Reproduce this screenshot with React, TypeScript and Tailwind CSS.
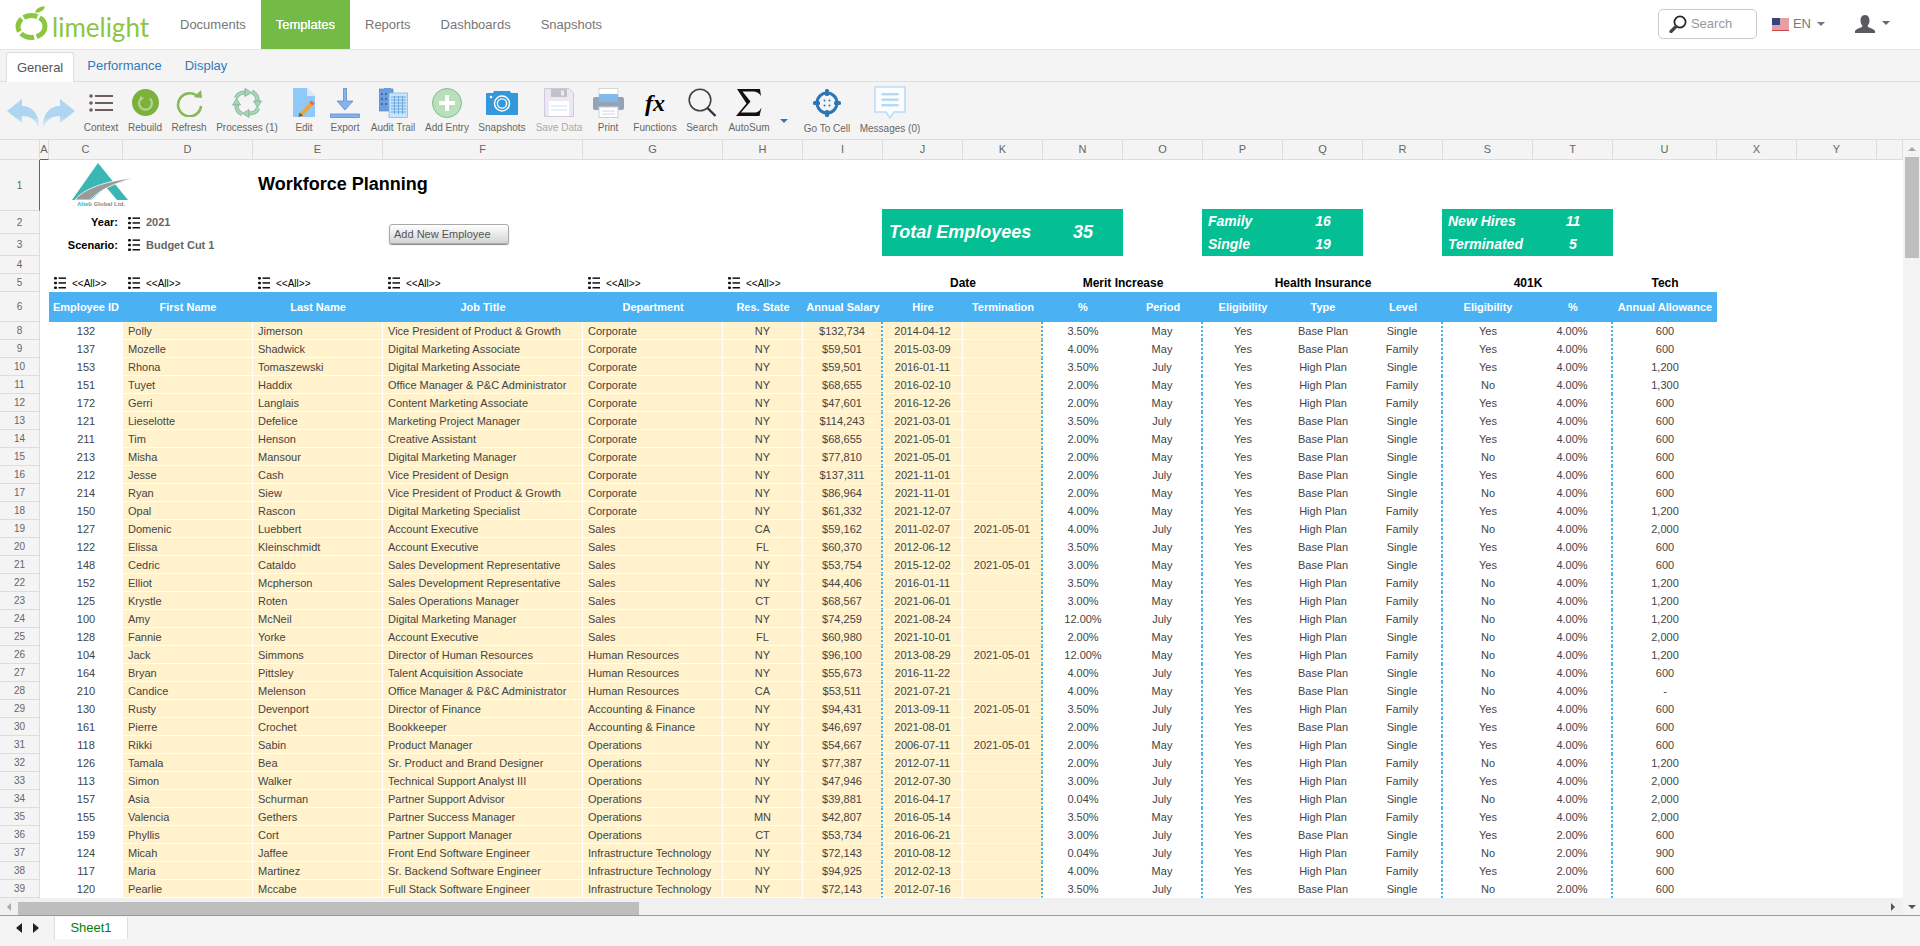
import type { ReactNode } from "react";

const data = `132|Polly|Jimerson|Vice President of Product & Growth|Corporate|NY|$132,734|2014-04-12||3.50%|May|Yes|Base Plan|Single|Yes|4.00%|600
137|Mozelle|Shadwick|Digital Marketing Associate|Corporate|NY|$59,501|2015-03-09||4.00%|May|Yes|Base Plan|Family|Yes|4.00%|600
153|Rhona|Tomaszewski|Digital Marketing Associate|Corporate|NY|$59,501|2016-01-11||3.50%|July|Yes|High Plan|Single|Yes|4.00%|1,200
151|Tuyet|Haddix|Office Manager & P&C Administrator|Corporate|NY|$68,655|2016-02-10||2.00%|May|Yes|High Plan|Family|No|4.00%|1,300
172|Gerri|Langlais|Content Marketing Associate|Corporate|NY|$47,601|2016-12-26||2.00%|May|Yes|High Plan|Family|Yes|4.00%|600
121|Lieselotte|Defelice|Marketing Project Manager|Corporate|NY|$114,243|2021-03-01||3.50%|July|Yes|Base Plan|Single|Yes|4.00%|600
211|Tim|Henson|Creative Assistant|Corporate|NY|$68,655|2021-05-01||2.00%|May|Yes|Base Plan|Single|Yes|4.00%|600
213|Misha|Mansour|Digital Marketing Manager|Corporate|NY|$77,810|2021-05-01||2.00%|May|Yes|Base Plan|Single|No|4.00%|600
212|Jesse|Cash|Vice President of Design|Corporate|NY|$137,311|2021-11-01||2.00%|July|Yes|Base Plan|Single|Yes|4.00%|600
214|Ryan|Siew|Vice President of Product & Growth|Corporate|NY|$86,964|2021-11-01||2.00%|May|Yes|Base Plan|Single|No|4.00%|600
150|Opal|Rascon|Digital Marketing Specialist|Corporate|NY|$61,332|2021-12-07||4.00%|May|Yes|High Plan|Family|Yes|4.00%|1,200
127|Domenic|Luebbert|Account Executive|Sales|CA|$59,162|2011-02-07|2021-05-01|4.00%|July|Yes|High Plan|Family|No|4.00%|2,000
122|Elissa|Kleinschmidt|Account Executive|Sales|FL|$60,370|2012-06-12||3.50%|May|Yes|Base Plan|Single|Yes|4.00%|600
148|Cedric|Cataldo|Sales Development Representative|Sales|NY|$53,754|2015-12-02|2021-05-01|3.00%|May|Yes|Base Plan|Single|Yes|4.00%|600
152|Elliot|Mcpherson|Sales Development Representative|Sales|NY|$44,406|2016-01-11||3.50%|May|Yes|High Plan|Family|No|4.00%|1,200
125|Krystle|Roten|Sales Operations Manager|Sales|CT|$68,567|2021-06-01||3.00%|May|Yes|High Plan|Family|No|4.00%|1,200
100|Amy|McNeil|Digital Marketing Manager|Sales|NY|$74,259|2021-08-24||12.00%|July|Yes|High Plan|Family|No|4.00%|1,200
128|Fannie|Yorke|Account Executive|Sales|FL|$60,980|2021-10-01||2.00%|May|Yes|High Plan|Single|No|4.00%|2,000
104|Jack|Simmons|Director of Human Resources|Human Resources|NY|$96,100|2013-08-29|2021-05-01|12.00%|May|Yes|High Plan|Family|No|4.00%|1,200
164|Bryan|Pittsley|Talent Acquisition Associate|Human Resources|NY|$55,673|2016-11-22||4.00%|July|Yes|Base Plan|Single|No|4.00%|600
210|Candice|Melenson|Office Manager & P&C Administrator|Human Resources|CA|$53,511|2021-07-21||4.00%|May|Yes|Base Plan|Single|No|4.00%|-
130|Rusty|Devenport|Director of Finance|Accounting & Finance|NY|$94,431|2013-09-11|2021-05-01|3.50%|July|Yes|High Plan|Family|Yes|4.00%|600
161|Pierre|Crochet|Bookkeeper|Accounting & Finance|NY|$46,697|2021-08-01||2.00%|July|Yes|Base Plan|Single|Yes|4.00%|600
118|Rikki|Sabin|Product Manager|Operations|NY|$54,667|2006-07-11|2021-05-01|2.00%|May|Yes|High Plan|Single|Yes|4.00%|600
126|Tamala|Bea|Sr. Product and Brand Designer|Operations|NY|$77,387|2012-07-11||2.00%|July|Yes|High Plan|Family|No|4.00%|1,200
113|Simon|Walker|Technical Support Analyst III|Operations|NY|$47,946|2012-07-30||3.00%|July|Yes|High Plan|Family|Yes|4.00%|2,000
157|Asia|Schurman|Partner Support Advisor|Operations|NY|$39,881|2016-04-17||0.04%|July|Yes|High Plan|Single|No|4.00%|2,000
155|Valencia|Gethers|Partner Success Manager|Operations|MN|$42,807|2016-05-14||3.50%|May|Yes|High Plan|Family|Yes|4.00%|2,000
159|Phyllis|Cort|Partner Support Manager|Operations|CT|$53,734|2016-06-21||3.00%|July|Yes|Base Plan|Single|Yes|2.00%|600
124|Micah|Jaffee|Front End Software Engineer|Infrastructure Technology|NY|$72,143|2010-08-12||0.04%|July|Yes|High Plan|Family|No|2.00%|900
117|Maria|Martinez|Sr. Backend Software Engineer|Infrastructure Technology|NY|$94,925|2012-02-13||4.00%|May|Yes|High Plan|Family|Yes|2.00%|600
120|Pearlie|Mccabe|Full Stack Software Engineer|Infrastructure Technology|NY|$72,143|2012-07-16||3.50%|July|Yes|Base Plan|Single|No|2.00%|600`
  .split("\n")
  .map((line) => line.split("|"));

const creamLeft = "pl-[5px] bg-[#fff2cc] border-r border-b border-white";
const creamCenter = "text-center bg-[#fff2cc] border-r border-b border-white";
const creamDotted =
  "text-center bg-[#fff2cc] border-b border-b-white border-r-2 border-dotted border-r-[#4ab1f3]";
const plain = "text-center";
const plainDotted = "text-center border-r-2 border-dotted border-r-[#4ab1f3]";

const cellStyles = [
  plain,
  creamLeft,
  creamLeft,
  creamLeft,
  creamLeft,
  creamCenter,
  creamDotted,
  creamCenter,
  creamDotted,
  plain,
  plainDotted,
  plain,
  plain,
  plainDotted,
  plain,
  plainDotted,
  plain,
];

const columnLetters = ["A", "C", "D", "E", "F", "G", "H", "I", "J", "K", "N", "O", "P", "Q", "R", "S", "T", "U", "X", "Y", ""];

const headers = [
  "Employee ID",
  "First Name",
  "Last Name",
  "Job Title",
  "Department",
  "Res. State",
  "Annual Salary",
  "Hire",
  "Termination",
  "%",
  "Period",
  "Eligibility",
  "Type",
  "Level",
  "Eligibility",
  "%",
  "Annual Allowance",
];

function ListIcon() {
  return (
    <svg width="12" height="12" viewBox="0 0 12 12" className="shrink-0">
      <g fill="#111">
        <rect x="0" y="0" width="3" height="2.4" rx="1" />
        <rect x="0" y="4.8" width="3" height="2.4" rx="1" />
        <rect x="0" y="9.6" width="3" height="2.4" rx="1" />
        <rect x="4.5" y="0.4" width="7.5" height="1.5" />
        <rect x="4.5" y="5.2" width="7.5" height="1.5" />
        <rect x="4.5" y="10" width="7.5" height="1.5" />
      </g>
    </svg>
  );
}

function Caret({ color = "#777" }: { color?: string }) {
  return (
    <svg width="8" height="4" viewBox="0 0 8 4">
      <polygon points="0,0 8,0 4,4" fill={color} />
    </svg>
  );
}

function LimeLogo() {
  return (
    <svg width="34" height="34" viewBox="0 0 34 34" className="shrink-0">
      <ellipse cx="16.5" cy="20.5" rx="13.5" ry="11" fill="none" stroke="#8cc63f" strokeWidth="5" strokeDasharray="14 2.5" />
      <path d="M20 6.5 C21 2.5 25 0 30 0.5 C29 4.5 25 7 20 6.5 Z" fill="#8cc63f" />
    </svg>
  );
}

function CompanyLogo() {
  return (
    <div className="mt-[3px] ml-[18px] flex w-[68px] flex-col items-center">
      <svg width="68" height="37" viewBox="0 0 68 37">
        <polygon points="31,0 61,37 5,37" fill="#3ab7b4" />
        <polygon points="39,24 50,37 24,37" fill="#fff" />
        <path d="M8 37 C16 26 38 18 67 15 C48 20 32 27 23 37 Z" fill="#9a9a9a" stroke="#fff" strokeWidth="0.8" />
      </svg>
      <span className="mt-[1px] text-[6px] leading-[7px] font-bold whitespace-nowrap text-[#888]">
        <span className="text-[#3ab7b4]">Alteb</span> Global Ltd.
      </span>
    </div>
  );
}

function Undo({ flip }: { flip?: boolean }) {
  const id = flip ? "redoFade" : "undoFade";
  return (
    <svg width="33" height="30" viewBox="0 0 33 30" className={flip ? "-scale-x-100" : ""}>
      <defs>
        <linearGradient id={id} x1="0" y1="0" x2="0" y2="1">
          <stop offset="0.6" stopColor="#afd6f0" />
          <stop offset="1" stopColor="#f0f6fa" />
        </linearGradient>
      </defs>
      <path d="M0 12 L15 0 V7 C25 7 33 15 32 30 C29 21 24 17 15 17 V24 Z" fill={`url(#${id})`} />
    </svg>
  );
}

function ContextIcon() {
  return (
    <svg width="24" height="20" viewBox="0 0 24 20">
      <g fill="#6f5d5d">
        <circle cx="2" cy="3" r="1.8" />
        <circle cx="2" cy="10" r="1.8" />
        <circle cx="2" cy="17" r="1.8" />
        <rect x="6" y="2" width="18" height="2" />
        <rect x="6" y="9" width="18" height="2" />
        <rect x="6" y="16" width="18" height="2" />
      </g>
    </svg>
  );
}

function RebuildIcon() {
  return (
    <svg width="27" height="27" viewBox="0 0 27 27">
      <circle cx="13.5" cy="13.5" r="13.5" fill="#7cb13d" />
      <path d="M9 9.5 A6.5 6.5 0 1 0 18 9.5" fill="none" stroke="#b3d68c" strokeWidth="2.2" />
      <polygon points="8,7 12,9 8.5,12" fill="#b3d68c" />
    </svg>
  );
}

function RefreshIcon() {
  return (
    <svg width="27" height="28" viewBox="0 0 27 28">
      <path d="M22 8 A11.5 11.5 0 1 0 25 17" fill="none" stroke="#88b958" strokeWidth="2.6" />
      <polygon points="18,8 26,9 25,1" fill="#88b958" />
    </svg>
  );
}

function ProcessesIcon() {
  const arrow = (
    <g>
      <path d="M4 10 Q6 4.5 13 4.5" fill="none" stroke="#6fa888" strokeWidth="4" />
      <path d="M4 10 Q6 4.5 13 4.5" fill="none" stroke="#a9d5b7" strokeWidth="2.8" />
      <polygon points="13,0.5 19.5,4.5 13,8.5" fill="#a9d5b7" stroke="#6fa888" strokeWidth="0.7" />
    </g>
  );
  return (
    <svg width="30" height="30" viewBox="0 0 30 30">
      {arrow}
      <g transform="rotate(90 15 15)">{arrow}</g>
      <g transform="rotate(180 15 15)">{arrow}</g>
      <g transform="rotate(270 15 15)">{arrow}</g>
    </svg>
  );
}

function EditIcon() {
  return (
    <svg width="23" height="29" viewBox="0 0 23 29">
      <path d="M0 0 H14 L22 8 V29 H0 Z" fill="#90c8f8" />
      <path d="M14 0 L22 8 H14 Z" fill="#d4e9fb" />
      <path d="M8 27 L19 15" stroke="#f2a534" strokeWidth="4" />
      <path d="M18 16 L20 14" stroke="#e0675a" strokeWidth="4" />
      <polygon points="5.5,29 6.5,24.5 10,27.5" fill="#7a5a2a" />
    </svg>
  );
}

function ExportIcon() {
  return (
    <svg width="30" height="30" viewBox="0 0 30 30">
      <path d="M13.5 0 H16.5 V13 H23 L15 22 L7 13 H13.5 Z" fill="#86b4ea" stroke="#4c87c9" strokeWidth="0.7" />
      <rect x="0.5" y="26" width="29" height="3.5" fill="#86b4ea" stroke="#4c87c9" strokeWidth="0.7" />
    </svg>
  );
}

function AuditIcon() {
  return (
    <svg width="29" height="30" viewBox="0 0 29 30">
      <rect x="0" y="1" width="14" height="22" fill="#6c9edb" stroke="#4c7fc0" strokeWidth="0.6" />
      <rect x="5" y="0" width="7" height="3" fill="#6c9edb" />
      <g fill="#3f6fb0">
        <rect x="2" y="5" width="2" height="2" />
        <rect x="6" y="5" width="2" height="2" />
        <rect x="2" y="10" width="2" height="2" />
        <rect x="6" y="10" width="2" height="2" />
        <rect x="2" y="15" width="2" height="2" />
        <rect x="6" y="15" width="2" height="2" />
      </g>
      <rect x="10" y="5" width="18.5" height="24.5" fill="#c6e4fb" stroke="#7fb2e0" strokeWidth="0.7" />
      <path
        d="M12 9 H27 M12 12 H27 M12 15 H27 M12 18 H27 M12 21 H27 M12 24 H27 M15.5 8 V26 M19.5 8 V26 M23.5 8 V26"
        stroke="#6fa9dd"
        strokeWidth="1"
      />
    </svg>
  );
}

function AddIcon() {
  return (
    <svg width="30" height="30" viewBox="0 0 30 30">
      <circle cx="15" cy="15" r="14.5" fill="#b9dfbb" stroke="#84bb90" />
      <rect x="13" y="7" width="4" height="16" fill="#fff" />
      <rect x="7" y="13" width="16" height="4" fill="#fff" />
    </svg>
  );
}

function CameraIcon() {
  return (
    <svg width="32" height="25" viewBox="0 0 32 25">
      <path d="M1 3 H7 L8 1 H24 L25 3 H31 Q32 3 32 4 V24 Q32 25 31 25 H1 Q0 25 0 24 V4 Q0 3 1 3 Z" fill="#3498db" />
      <circle cx="16" cy="13.5" r="7.5" fill="none" stroke="#fff" strokeWidth="1.4" />
      <circle cx="16" cy="13.5" r="4.6" fill="none" stroke="#fff" strokeWidth="1.4" />
      <circle cx="5" cy="7" r="1.3" fill="#fff" />
    </svg>
  );
}

function SaveIcon() {
  return (
    <svg width="30" height="29" viewBox="0 0 30 29">
      <path d="M0.5 0.5 H25 L29.5 5 V28.5 H0.5 Z" fill="#ebe7f3" stroke="#cfc8de" />
      <rect x="7" y="1" width="16" height="8" fill="#c2c2c6" />
      <rect x="17" y="2.5" width="3" height="5" fill="#ebe7f3" />
      <rect x="5" y="13" width="20" height="15" fill="#fff" />
      <path d="M7 18 H23 M7 22 H23" stroke="#cfe0f0" />
    </svg>
  );
}

function PrintIcon() {
  return (
    <svg width="31" height="30" viewBox="0 0 31 30">
      <rect x="6" y="0.5" width="19" height="9" fill="#fff" stroke="#d5d5d5" />
      <rect x="0" y="9" width="31" height="13" rx="2" fill="#93a4b8" />
      <rect x="6" y="6" width="19" height="8" fill="#82b8ec" />
      <rect x="6" y="19" width="19" height="10.5" fill="#fff" stroke="#c8d0d8" />
      <path d="M9 23 H22 M9 26 H22" stroke="#cfd8e2" />
    </svg>
  );
}

function SearchIcon() {
  return (
    <svg width="29" height="29" viewBox="0 0 29 29">
      <circle cx="12" cy="12" r="10.8" fill="none" stroke="#444" strokeWidth="1.6" />
      <path d="M19.5 20 L27.5 28" stroke="#333" strokeWidth="2.4" />
    </svg>
  );
}

function SigmaIcon() {
  return (
    <svg width="26" height="27" viewBox="0 0 26 27">
      <path d="M1 0 H24 L25 7 C23 4 21 2.5 17 2.5 H6.5 L14.5 12.5 L5 23.5 H18 C22 23.5 24 21.5 25.5 18.5 L23.5 27 H0 L10.5 14.5 Z" fill="#111" />
    </svg>
  );
}

function GoToIcon() {
  return (
    <svg width="28" height="28" viewBox="0 0 28 28">
      <circle cx="14" cy="14" r="10" fill="none" stroke="#2e75b6" strokeWidth="3" />
      <g fill="#2e75b6">
        <rect x="12" y="0" width="4" height="7" rx="1.5" />
        <rect x="12" y="21" width="4" height="7" rx="1.5" />
        <rect x="0" y="12" width="7" height="4" rx="1.5" />
        <rect x="21" y="12" width="7" height="4" rx="1.5" />
        <circle cx="11.5" cy="11.5" r="1" />
        <circle cx="16.5" cy="11.5" r="1" />
        <circle cx="11.5" cy="16.5" r="1" />
        <circle cx="16.5" cy="16.5" r="1" />
      </g>
    </svg>
  );
}

function MessagesIcon() {
  return (
    <svg width="32" height="33" viewBox="0 0 32 33">
      <path d="M1 1 H31 V26 H20 L16 32 L12 26 H1 Z" fill="#fafcff" stroke="#bcdcf8" strokeWidth="1.6" />
      <g fill="#b5d8f6">
        <rect x="7.5" y="7" width="17" height="2.4" />
        <rect x="7.5" y="12.5" width="17" height="2.4" />
        <rect x="7.5" y="18" width="17" height="2.4" />
      </g>
    </svg>
  );
}

function FlagIcon() {
  return (
    <svg width="17" height="13" viewBox="0 0 17 13">
      <rect width="17" height="13" fill="#fff" />
      <path d="M0 1 H17 M0 3 H17 M0 5 H17 M0 7 H17 M0 9 H17 M0 11 H17 M0 12.5 H17" stroke="#c8434a" />
      <rect width="8" height="7" fill="#39427a" />
    </svg>
  );
}

function UserIcon() {
  return (
    <svg width="20" height="18" viewBox="0 0 20 18">
      <path
        d="M10 0 C13.5 0 14.5 3 14.5 6 C14.5 8.5 13 10 12.5 11 C13 13 19 13.5 20 16 V18 H0 V16 C1 13.5 7 13 7.5 11 C7 10 5.5 8.5 5.5 6 C5.5 3 6.5 0 10 0 Z"
        fill="#5b5b5f"
      />
    </svg>
  );
}

function NavSearchIcon() {
  return (
    <svg width="18" height="18" viewBox="0 0 18 18">
      <circle cx="11" cy="7" r="5.6" fill="none" stroke="#222" strokeWidth="1.7" />
      <path d="M7 11.5 L2 16.5" stroke="#444" strokeWidth="3.2" strokeLinecap="round" />
    </svg>
  );
}

const tools: { label: string; width: string; icon: ReactNode; muted?: boolean }[] = [
  { label: "Context", width: "w-[44px]", icon: <ContextIcon /> },
  { label: "Rebuild", width: "w-[44px]", icon: <RebuildIcon /> },
  { label: "Refresh", width: "w-[44px]", icon: <RefreshIcon /> },
  { label: "Processes (1)", width: "w-[72px]", icon: <ProcessesIcon /> },
  { label: "Edit", width: "w-[42px]", icon: <EditIcon /> },
  { label: "Export", width: "w-[40px]", icon: <ExportIcon /> },
  { label: "Audit Trail", width: "w-[56px]", icon: <AuditIcon /> },
  { label: "Add Entry", width: "w-[52px]", icon: <AddIcon /> },
  { label: "Snapshots", width: "w-[58px]", icon: <CameraIcon /> },
  { label: "Save Data", width: "w-[56px]", icon: <SaveIcon />, muted: true },
  { label: "Print", width: "w-[42px]", icon: <PrintIcon /> },
  {
    label: "Functions",
    width: "w-[52px]",
    icon: <span className="font-['Liberation_Serif',serif] text-[24px] leading-[30px] font-bold text-black italic">fx</span>,
  },
  { label: "Search", width: "w-[42px]", icon: <SearchIcon /> },
  { label: "AutoSum", width: "w-[52px]", icon: <SigmaIcon /> },
];

function Tool({ label, width, icon, muted, labelGap = "mt-[3px]" }: { label: string; width: string; icon: ReactNode; muted?: boolean; labelGap?: string }) {
  return (
    <div className={`flex shrink-0 flex-col items-center ${width}`}>
      <div className="flex h-[33px] items-center justify-center">{icon}</div>
      <span className={`text-[10px] leading-[12px] whitespace-nowrap ${labelGap} ${muted ? "text-[#aaa]" : "text-[#666]"}`}>{label}</span>
    </div>
  );
}

function RowHead({ label, className = "" }: { label: string; className?: string }) {
  return (
    <div className={`col-start-1 flex items-center justify-center border-r border-b border-[#ddd] bg-[#f4f4f4] text-[10px] text-[#666] ${className}`}>
      {label}
    </div>
  );
}

function Filter({ label, className }: { label: string; className: string }) {
  return (
    <div className={`flex items-center whitespace-nowrap ${className}`}>
      <ListIcon />
      <span className="ml-[6px] text-[10px] text-black">{label}</span>
    </div>
  );
}

function Band({ label, className }: { label: string; className: string }) {
  return <div className={`flex items-center justify-center text-[12px] font-bold text-black ${className}`}>{label}</div>;
}

function StatRow({ label, value, labelWidth }: { label: string; value: string; labelWidth: string }) {
  return (
    <div className="flex h-[23px] items-center">
      <span className={`pl-[6px] ${labelWidth}`}>{label}</span>
      <span className="w-[80px] text-center">{value}</span>
    </div>
  );
}

export default function App() {
  return (
    <div className="flex h-[946px] w-[1920px] flex-col overflow-hidden bg-white font-['Liberation_Sans',Arial,sans-serif]">
      {/* top nav */}
      <header className="flex h-[50px] shrink-0 items-start border-b border-[#e5e5e5] bg-white">
        <div className="flex h-[49px] w-[165px] shrink-0 items-start pt-[6px] pl-[15px]">
          <LimeLogo />
          <span className="mt-[4px] ml-[3px] font-['Lato',sans-serif] text-[26px] leading-[34px] text-[#8cc63f]">limelight</span>
        </div>
        <nav className="flex h-[49px] text-[13px] text-[#777]">
          <a className="flex items-center px-[15px]">Documents</a>
          <a className="flex items-center bg-[#74bb45] px-[15px] text-white [text-shadow:0_0_0.6px_#fff]">Templates</a>
          <a className="flex items-center px-[15px]">Reports</a>
          <a className="flex items-center px-[15px]">Dashboards</a>
          <a className="flex items-center px-[15px]">Snapshots</a>
        </nav>
        <div className="mt-[9px] ml-auto flex items-center">
          <div className="flex h-[30px] w-[99px] items-center rounded-[5px] border border-[#ccc] pl-[10px]">
            <NavSearchIcon />
            <span className="ml-[4px] text-[13px] text-[#999]">Search</span>
          </div>
          <div className="ml-[15px] flex items-center">
            <FlagIcon />
            <span className="ml-[4px] text-[13px] text-[#777]">EN</span>
            <span className="ml-[6px] flex">
              <Caret />
            </span>
          </div>
          <div className="mr-[30px] ml-[30px] flex items-center">
            <UserIcon />
            <span className="mb-[3px] ml-[7px] flex">
              <Caret color="#666" />
            </span>
          </div>
        </div>
      </header>

      {/* ribbon tabs */}
      <div className="flex h-[32px] shrink-0 items-end gap-[3px] border-b border-[#ddd] bg-[#f4f4f4] pl-[6px] text-[13px]">
        <div className="-mb-px flex h-[30px] items-center rounded-t-[3px] border border-b-0 border-[#ddd] bg-white px-[10px] text-[#555]">General</div>
        <div className="flex h-[30px] items-center px-[10px] text-[#337ab7]">Performance</div>
        <div className="flex h-[30px] items-center px-[10px] text-[#337ab7]">Display</div>
      </div>

      {/* toolbar */}
      <div className="flex h-[58px] shrink-0 border-b border-[#ddd] bg-[#f4f4f4] pt-[4px] pl-[6px]">
        <div className="flex h-[43px] w-[35px] items-end justify-center">
          <Undo />
        </div>
        <div className="flex h-[43px] w-[34px] items-end justify-center">
          <Undo flip />
        </div>
        <div className="w-[4px]" />
        {tools.map((tool) => (
          <Tool key={tool.label} {...tool} />
        ))}
        <div className="flex h-[37px] w-[18px] shrink-0 items-end justify-center">
          <span className="flex">
            <Caret color="#337ab7" />
          </span>
        </div>
        <Tool label="Go To Cell" width="w-[68px]" icon={<GoToIcon />} labelGap="mt-[4px]" />
        <Tool label="Messages (0)" width="w-[58px]" icon={<MessagesIcon />} labelGap="mt-[4px]" />
      </div>

      {/* sheet */}
      <div className="flex h-[775px] shrink-0">
        <div className="flex w-[1903px] flex-col">
          <div className="grid grid-cols-[40px_9px_74px_130px_130px_200px_140px_80px_80px_80px_80px_80px_80px_80px_80px_80px_90px_80px_104px_80px_80px_26px] grid-rows-[20px_51px_23px_22px_18px_18px_30px_repeat(32,18px)] text-[11px]">
            <div className="col-start-1 border-r border-b border-[#ddd] bg-[#f4f4f4]" />
            {columnLetters.map((letter, i) => (
              <div
                key={i}
                className={`flex items-center justify-center border-r border-b border-[#ddd] bg-[#f4f4f4] text-[11px] text-[#666] ${letter === "A" ? "border-b-[#5a55d5]" : ""}`}
              >
                {letter}
              </div>
            ))}

            <RowHead label="1" className="border-r-[#5a55d5] bg-[#eeeef4]" />
            <div className="col-span-2 col-start-3">
              <CompanyLogo />
            </div>
            <div className="col-span-3 col-start-5 flex items-center pb-[3px] pl-[5px] text-[18px] font-bold whitespace-nowrap text-black">Workforce Planning</div>

            <RowHead label="2" />
            <div className="col-start-3 flex items-center justify-end pr-[5px] font-bold text-black">Year:</div>
            <div className="flex items-center pl-[5px] whitespace-nowrap">
              <ListIcon />
              <span className="ml-[6px] font-bold text-[#666]">2021</span>
            </div>
            <div className="col-start-6 row-span-2 flex items-center pl-[6px]">
              <button className="h-[20px] w-[120px] rounded-[3px] border border-[#aaa] bg-gradient-to-b from-white to-[#d4d4d4] pl-[4px] text-left text-[11px] leading-[18px] text-[#555] shadow-[0_1px_1px_#888]">
                Add New Employee
              </button>
            </div>
            <div className="col-span-3 col-start-10 row-span-2 -mt-[2px] -ml-px flex items-center bg-[#05bf94] text-[18px] font-bold text-white italic">
              <span className="w-[161px] pl-[7px]">Total Employees</span>
              <span className="w-[80px] text-center">35</span>
            </div>
            <div className="col-span-2 col-start-14 row-span-2 -mt-[2px] -ml-px flex flex-col justify-center bg-[#05bf94] text-[14px] font-bold text-white italic">
              <StatRow label="Family" value="16" labelWidth="w-[81px]" />
              <StatRow label="Single" value="19" labelWidth="w-[81px]" />
            </div>
            <div className="col-span-2 col-start-17 row-span-2 -mt-[2px] -ml-px flex flex-col justify-center bg-[#05bf94] text-[14px] font-bold text-white italic">
              <StatRow label="New Hires" value="11" labelWidth="w-[91px]" />
              <StatRow label="Terminated" value="5" labelWidth="w-[91px]" />
            </div>

            <RowHead label="3" />
            <div className="col-start-3 flex items-center justify-end pr-[5px] font-bold text-black">Scenario:</div>
            <div className="col-start-4 flex items-center pl-[5px] whitespace-nowrap">
              <ListIcon />
              <span className="ml-[6px] font-bold text-[#666]">Budget Cut 1</span>
            </div>

            <RowHead label="4" />

            <RowHead label="5" />
            <Filter label="<<All>>" className="col-start-3 pl-[5px]" />
            <Filter label="<<All>>" className="col-start-4 pl-[5px]" />
            <Filter label="<<All>>" className="col-start-5 pl-[5px]" />
            <Filter label="<<All>>" className="col-start-6 pl-[5px]" />
            <Filter label="<<All>>" className="col-start-7 pl-[5px]" />
            <Filter label="<<All>>" className="col-start-8 pl-[5px]" />
            <Band label="Date" className="col-span-2 col-start-10" />
            <Band label="Merit Increase" className="col-span-2 col-start-12" />
            <Band label="Health Insurance" className="col-span-3 col-start-14" />
            <Band label="401K" className="col-span-2 col-start-17" />
            <Band label="Tech" className="col-start-19" />

            <RowHead label="6" />
            {headers.map((title, i) => (
              <div
                key={i}
                className={`flex items-center justify-center bg-[#4ab1f3] font-bold whitespace-nowrap text-white ${i === 0 ? "col-start-3" : ""}`}
              >
                {title}
              </div>
            ))}

            {data.map((row, r) => (
              <div key={r} className="contents">
                <RowHead label={String(r + 8)} />
                {row.map((value, c) => (
                  <div
                    key={c}
                    className={`overflow-hidden leading-[18px] whitespace-nowrap text-[#444] ${cellStyles[c]} ${c === 0 ? "col-start-3" : ""}`}
                  >
                    {value}
                  </div>
                ))}
              </div>
            ))}
          </div>

          {/* horizontal scrollbar */}
          <div className="flex h-[17px] items-center bg-[#f0f0f0]">
            <div className="flex w-[18px] justify-center">
              <svg width="4" height="8" viewBox="0 0 4 8">
                <polygon points="4,0 4,8 0,4" fill="#aaa" />
              </svg>
            </div>
            <div className="mt-[3px] h-[13px] w-[621px] bg-[#bebebe]" />
            <div className="ml-auto flex w-[20px] justify-center">
              <svg width="4" height="8" viewBox="0 0 4 8">
                <polygon points="0,0 4,4 0,8" fill="#555" />
              </svg>
            </div>
          </div>
        </div>

        {/* vertical scrollbar */}
        <div className="flex w-[17px] flex-col items-center bg-[#f4f4f4]">
          <div className="flex h-[17px] items-center">
            <svg width="8" height="4" viewBox="0 0 8 4">
              <polygon points="0,4 8,4 4,0" fill="#aaa" />
            </svg>
          </div>
          <div className="h-[101px] w-[14px] bg-[#bebebe]" />
          <div className="mt-auto flex h-[17px] items-center">
            <svg width="8" height="4" viewBox="0 0 8 4">
              <polygon points="0,0 8,0 4,4" fill="#555" />
            </svg>
          </div>
        </div>
      </div>

      {/* sheet tabs */}
      <div className="flex h-[31px] shrink-0 items-start border-t border-[#999] bg-[#f4f4f4]">
        <div className="flex h-[23px] w-[54px] items-center justify-center gap-[11px]">
          <svg width="6" height="10" viewBox="0 0 6 10">
            <polygon points="6,0 6,10 0,5" fill="#222" />
          </svg>
          <svg width="6" height="10" viewBox="0 0 6 10">
            <polygon points="0,0 6,5 0,10" fill="#222" />
          </svg>
        </div>
        <div className="mt-[1px] flex h-[22px] w-[74px] items-center justify-center border-x border-[#ddd] bg-white text-[13px] text-[#0a7d0a]">Sheet1</div>
      </div>
    </div>
  );
}
